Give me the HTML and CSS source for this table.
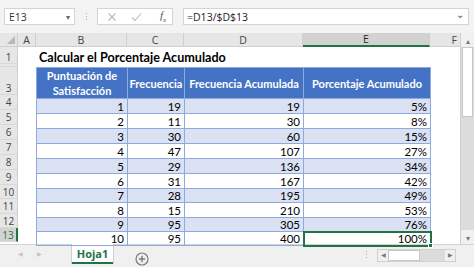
FILE: index.html
```html
<!DOCTYPE html>
<html lang="es">
<head>
<meta charset="utf-8">
<link rel="stylesheet" href="styles.css">
</head>
<body>
<div class="app">
  <div class="toolbar">
    <div class="namebox"><span>E13</span><span class="dd">&#9662;</span></div>
    <div class="grip"><i></i><i></i><i></i></div>
    <div class="fxbox">
      <svg class="ic" width="10" height="10" viewBox="0 0 10 10"><path d="M1.5 1.5 L8.5 8.5 M8.5 1.5 L1.5 8.5" stroke="#b9b9b9" stroke-width="1.1" fill="none"/></svg>
      <svg class="ic" width="11" height="10" viewBox="0 0 11 10"><path d="M1 5.5 L4 8.5 L10 1.5" stroke="#b9b9b9" stroke-width="1.1" fill="none"/></svg>
      <span class="fx">f<sub>x</sub></span>
    </div>
    <div class="formula"><span>=D13/$D$13</span><span class="chev">&#8964;</span></div>
  </div>
  <div class="main">
    <div class="sheet">
      <div class="corner"><span class="tri"></span></div>
      <div class="ch">A</div>
      <div class="ch">B</div>
      <div class="ch">C</div>
      <div class="ch">D</div>
      <div class="ch ch-sel">E</div>
      <div class="ch ch-f">F</div>

      <div class="rh r1">1</div>
      <div class="rh r2"></div>
      <div class="rh r3">3</div>
      <div class="rh r4">4</div>
      <div class="rh r5">5</div>
      <div class="rh r6">6</div>
      <div class="rh r7">7</div>
      <div class="rh r8">8</div>
      <div class="rh r9">9</div>
      <div class="rh r10">10</div>
      <div class="rh r11">11</div>
      <div class="rh r12">12</div>
      <div class="rh r13 rh-sel">13</div>

      <div class="title">Calcular el Porcentaje Acumulado</div>

      <table class="data">
        <colgroup><col class="cb"><col class="cc"><col class="cd"><col class="ce"></colgroup>
        <thead>
          <tr class="hdr"><th>Puntuación de<br>Satisfacción</th><th>Frecuencia</th><th>Frecuencia Acumulada</th><th>Porcentaje Acumulado</th></tr>
        </thead>
        <tbody>
          <tr class="band h15"><td>1</td><td>19</td><td>19</td><td>5%</td></tr>
          <tr class="h15"><td>2</td><td>11</td><td>30</td><td>8%</td></tr>
          <tr class="band h15"><td>3</td><td>30</td><td>60</td><td>15%</td></tr>
          <tr class="h15"><td>4</td><td>47</td><td>107</td><td>27%</td></tr>
          <tr class="band h15"><td>5</td><td>29</td><td>136</td><td>34%</td></tr>
          <tr class="h15"><td>6</td><td>31</td><td>167</td><td>42%</td></tr>
          <tr class="band h14"><td>7</td><td>28</td><td>195</td><td>49%</td></tr>
          <tr class="h15"><td>8</td><td>15</td><td>210</td><td>53%</td></tr>
          <tr class="band h14"><td>9</td><td>95</td><td>305</td><td>76%</td></tr>
          <tr class="h14"><td>10</td><td>95</td><td>400</td><td class="sel">100%<span class="handle"></span></td></tr>
        </tbody>
      </table>
    </div>
    <div class="vscroll">
      <div class="vbtn">&#9652;</div>
      <div class="vthumb"></div>
      <div class="vtrack"></div>
      <div class="vbtn">&#9662;</div>
    </div>
  </div>
  <div class="tabbar">
    <div class="nav"><span>&#9664;</span><span>&#9654;</span></div>
    <div class="tab">Hoja1</div>
    <div class="add">
      <svg width="14" height="14" viewBox="0 0 14 14"><circle cx="7" cy="7" r="6" stroke="#7a7a7a" stroke-width="1.2" fill="none"/><path d="M7 3.8 V10.2 M3.8 7 H10.2" stroke="#7a7a7a" stroke-width="1.4"/></svg>
    </div>
    <div class="spacer"></div>
    <div class="grip2"><i></i><i></i><i></i></div>
    <div class="hscroll">
      <span class="hbtn">&#9664;</span>
      <span class="hthumb"></span>
      <span class="htrack"></span>
      <span class="hbtn">&#9654;</span>
    </div>
  </div>
</div>
</body>
</html>
```

FILE: styles.css
```css
* { box-sizing: border-box; }
html, body { margin: 0; padding: 0; }
body {
  width: 474px;
  height: 267px;
  overflow: hidden;
  background: #f3f3f3;
  font-family: "Open Sans", "Noto Sans", sans-serif;
}
.app { width: 474px; height: 267px; display: flex; flex-direction: column; }

/* toolbar */
.toolbar {
  height: 33px;
  display: flex;
  align-items: flex-start;
  padding: 8px 4px 0 4px;
  background: #f3f3f3;
}
.namebox {
  width: 71px;
  height: 17px;
  background: #fff;
  border: 1px solid #d4d4d4;
  display: flex;
  justify-content: space-between;
  align-items: center;
  padding: 0 4px 0 4px;
  font-size: 10.5px;
  color: #333;
}
.namebox .dd { font-size: 8px; color: #666; }
.grip {
  width: 22px;
  height: 17px;
  display: flex;
  flex-direction: column;
  align-items: center;
  justify-content: center;
  gap: 2px;
}
.grip i, .grip2 i { display: block; width: 1px; height: 1px; background: #a8a8a8; }
.fxbox {
  width: 76px;
  height: 17px;
  background: #fff;
  border: 1px solid #d4d4d4;
  display: flex;
  align-items: center;
  padding-left: 9px;
  gap: 14px;
}
.fx {
  font-family: "Liberation Serif", serif;
  font-style: italic;
  font-size: 11px;
  color: #555;
  margin-left: 4px;
}
.fx sub { font-size: 7px; }
.formula {
  margin-left: 10px;
  width: 286px;
  height: 17px;
  background: #fff;
  border: 1px solid #d4d4d4;
  display: flex;
  justify-content: space-between;
  align-items: center;
  padding: 0 4px 0 3px;
  font-size: 10.5px;
  color: #222;
}
.chev { font-size: 10px; color: #555; line-height: 8px; margin-top: -5px; }

/* sheet */
.main { display: flex; height: 211px; }
.sheet {
  width: 460px;
  background: #fff;
  display: grid;
  grid-template-columns: 18px 18px 91px 57px 119px 127px 30px;
  grid-template-rows: 14px 17px 3px 28px 15px 15px 15px 15px 15px 15px 14px 15px 14px 14px 1fr;
  font-family: "Lato", "Open Sans", sans-serif;
  position: relative;
}
.corner {
  grid-column: 1; grid-row: 1;
  background: #e6e6e6;
  border-right: 1px solid #cfcfcf;
  border-bottom: 1px solid #cfcfcf;
  position: relative;
}
.corner .tri {
  position: absolute; right: 2px; bottom: 2px;
  width: 0; height: 0;
  border-left: 8px solid transparent;
  border-bottom: 8px solid #b8b8b8;
}
.ch {
  grid-row: 1;
  background: #e6e6e6;
  border-right: 1px solid #d0d0d0;
  border-bottom: 1px solid #cfcfcf;
  font-family: "Open Sans", sans-serif;
  font-size: 10.5px;
  color: #444;
  display: flex; align-items: center; justify-content: center;
}
.ch-sel { background: #d2d2d2; border-bottom: 2px solid #217346; color: #262626; }
.ch-f { border-right: none; justify-content: flex-end; padding-right: 3px; }
.rh {
  grid-column: 1;
  background: #e6e6e6;
  border-right: 1px solid #cfcfcf;
  border-bottom: 1px solid #d8d8d8;
  font-family: "Open Sans", sans-serif;
  font-size: 10px;
  color: #444;
  display: flex; align-items: center; justify-content: center;
}
.r1 { grid-row: 2; padding-top: 4px; } .r2 { grid-row: 3; } .r3 { grid-row: 4; padding-top: 14px; }
.r4 { grid-row: 5; } .r5 { grid-row: 6; } .r6 { grid-row: 7; } .r7 { grid-row: 8; }
.r8 { grid-row: 9; } .r9 { grid-row: 10; } .r10 { grid-row: 11; } .r11 { grid-row: 12; }
.r12 { grid-row: 13; } .r13 { grid-row: 14; }
.rh-sel { background: #d2d2d2; color: #217346; border-right: 2px solid #217346; }

.title {
  grid-column: 3 / 8;
  grid-row: 2;
  font-weight: 700;
  font-size: 12.6px;
  color: #000;
  padding-left: 3px;
  padding-top: 4px;
  display: flex; align-items: center;
  white-space: nowrap;
}

.data {
  grid-column: 3 / 7;
  grid-row: 4 / 15;
  border-collapse: collapse;
  table-layout: fixed;
  width: 394px;
  font-size: 11.5px;
  color: #000;
}
.cb { width: 91px; } .cc { width: 57px; } .cd { width: 119px; } .ce { width: 127px; }
.data th {
  background: #4472c4;
  color: #fff;
  font-weight: 700;
  font-size: 11px;
  line-height: 15px;
  height: 28px;
  padding: 0;
  border: 1px solid #8ea9db;
  text-align: center;
  white-space: nowrap;
}
.data td {
  padding: 0 3px 0 0;
  text-align: right;
  border: 1px solid #8ea9db;
  line-height: 13px;
  white-space: nowrap;
}
.h15 td { height: 15px; }
.h14 td { height: 14px; }
.band td { background: #d9e1f2; }
.data td.sel {
  position: relative;
  outline: 2px solid #217346;
  outline-offset: -1px;
}
.handle {
  position: absolute;
  right: -3px; bottom: -3px;
  width: 5px; height: 5px;
  background: #217346;
  border: 1px solid #fff;
}

/* vertical scrollbar */
.vscroll {
  width: 14px;
  display: flex;
  flex-direction: column;
  background: #dcdcdc;
  border-left: 1px solid #d0d0d0;
}
.vbtn {
  height: 14px;
  background: #f0f0f0;
  font-size: 8px;
  color: #777;
  display: flex; align-items: center; justify-content: center;
}
.vthumb { height: 70px; background: #fff; border: 1px solid #c8c8c8; margin: 0 1px; }
.vtrack { flex: 1; }

/* tab bar */
.tabbar {
  height: 23px;
  display: flex;
  align-items: flex-start;
  background: #f0f0f0;
  border-top: 1px solid #d4d4d4;
}
.nav { width: 72px; display: flex; gap: 14px; padding-left: 18px; padding-top: 5px; font-size: 6px; color: #c4c4c4; }
.tab {
  width: 41px;
  height: 20px;
  background: #fff;
  color: #217346;
  font-weight: 700;
  font-size: 11px;
  font-family: "Open Sans", sans-serif;
  display: flex; align-items: center; justify-content: center;
  border-bottom: 2px solid #217346;
  box-shadow: 1px 0 0 #cfcfcf, -1px 0 0 #cfcfcf;
  margin-top: -1px;
}
.add { margin-left: 22px; padding-top: 4px; }
.spacer { flex: 1; }
.grip2 { display: flex; flex-direction: column; gap: 2px; padding-top: 6px; margin-right: 10px; }
.hscroll {
  width: 79px;
  height: 13px;
  margin-top: 4px;
  margin-right: 18px;
  display: flex;
  align-items: center;
  background: #dcdcdc;
  border: 1px solid #d0d0d0;
}
.hbtn { width: 10px; font-size: 6px; color: #777; text-align: center; background: #f0f0f0; height: 11px; line-height: 11px; }
.hthumb { width: 32px; height: 11px; background: #fff; border: 1px solid #c8c8c8; }
.htrack { flex: 1; }
```
